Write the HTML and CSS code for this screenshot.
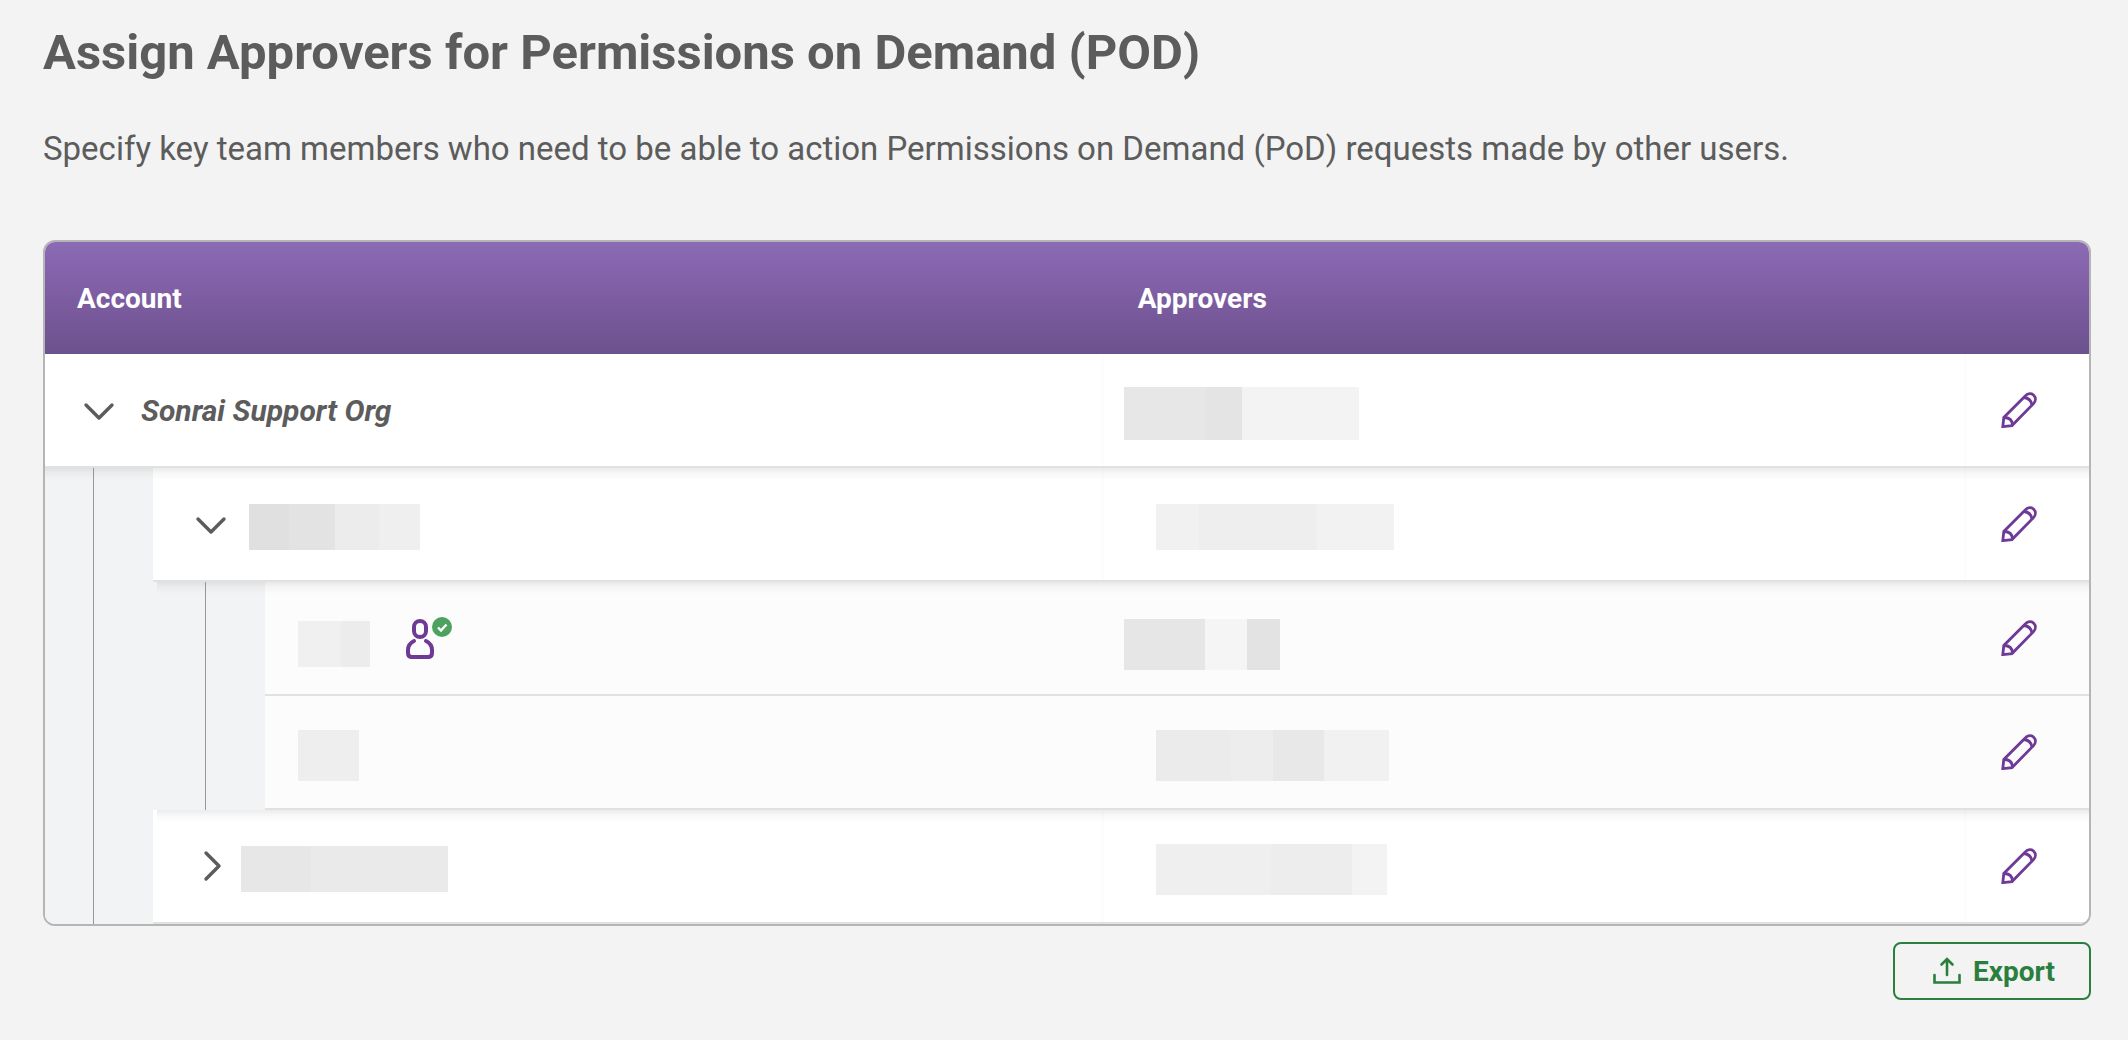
FILE: index.html
```html
<!DOCTYPE HTML>
<html lang="en">
  <head>
    <title>Assign Approvers</title>
    <meta charset="utf-8">
    <link rel="stylesheet" href="styles.css">
  </head>
  <body>

  <!-- shared icons -->
  <svg class="sprite" aria-hidden="true">
    <symbol id="chevron" viewBox="0 0 32 32">
      <path d="M3 11 L16 24 L29 11" fill="none" stroke="currentColor" stroke-width="3.4" stroke-linecap="round" stroke-linejoin="round"/>
    </symbol>
    <symbol id="pencil" viewBox="0 0 36 36">
      <g fill="none" stroke="currentColor" stroke-width="2.8">
        <path d="M1.8 34.6 L2.8 25.5 L24.5 3.7 C26.8 1 30.5 1 32.7 3.2 C35 5.5 35 9 32.5 11.6 L11 33.6 Z"/>
        <path d="M3 25.5 C8.5 25.5 11.3 28.4 11.5 33"/>
        <path d="M23 5.5 C27.5 6 30.3 8.7 31 13"/>
      </g>
    </symbol>
  </svg>

  <h1>Assign Approvers for Permissions on Demand (POD)</h1>
  <p class="intro">Specify key team members who need to be able to action Permissions on Demand (PoD) requests made by other users.</p>

  <div class="table-frame">
    <table>
      <colgroup>
        <col class="col-account">
        <col>
        <col class="col-edit">
      </colgroup>
      <thead>
        <tr>
          <th scope="col">Account</th>
          <th scope="col" class="approvers-head">Approvers</th>
          <td></td>
        </tr>
      </thead>
      <tbody>
        <tr>
          <td>
            <div class="tree">
              <div class="node root">
                <button class="toggle" aria-label="Collapse"><svg><use href="#chevron"/></svg></button>
                <span class="org">Sonrai Support Org</span>
              </div>
            </div>
          </td>
          <td class="approvers"><span class="mask root-approvers"></span></td>
          <td class="edit"><button aria-label="Edit"><svg><use href="#pencil"/></svg></button></td>
        </tr>
        <tr class="shade">
          <td>
            <div class="tree">
              <span class="indent shade"></span>
              <div class="node shade">
                <button class="toggle" aria-label="Collapse"><svg><use href="#chevron"/></svg></button>
                <span class="mask group-a"></span>
              </div>
            </div>
          </td>
          <td class="approvers inner"><span class="mask group-a-approvers"></span></td>
          <td class="edit"><button aria-label="Edit"><svg><use href="#pencil"/></svg></button></td>
        </tr>
        <tr class="leaf shade">
          <td>
            <div class="tree">
              <span class="indent"></span>
              <span class="indent deep shade"></span>
              <div class="node shade">
                <span class="mask low leaf-a"></span>
                <svg class="user" viewBox="0 0 46 42">
                  <g fill="none" stroke="#6f3996" stroke-width="4" stroke-linecap="round">
                    <rect x="8" y="4" width="12" height="16" rx="6"/>
                    <path d="M8 24 C4 26 2 29 2 33 V36 Q2 40 6 40 H22 Q26 40 26 36 V33 C26 29 24 26 20 24"/>
                  </g>
                  <circle cx="36" cy="10" r="10" fill="#4ea25f"/>
                  <path d="M32 10.5 L35 13.5 L40.5 7.5" fill="none" stroke="#fff" stroke-width="2.4"/>
                </svg>
              </div>
            </div>
          </td>
          <td class="approvers"><span class="mask low leaf-a-approvers"></span></td>
          <td class="edit"><button aria-label="Edit"><svg><use href="#pencil"/></svg></button></td>
        </tr>
        <tr class="leaf">
          <td>
            <div class="tree">
              <span class="indent"></span>
              <span class="indent deep"></span>
              <div class="node">
                <span class="mask leaf-b"></span>
              </div>
            </div>
          </td>
          <td class="approvers inner"><span class="mask leaf-b-approvers"></span></td>
          <td class="edit"><button aria-label="Edit"><svg><use href="#pencil"/></svg></button></td>
        </tr>
        <tr class="shade">
          <td>
            <div class="tree">
              <span class="indent"></span>
              <div class="node shade closed">
                <button class="toggle" aria-label="Expand"><svg><use href="#chevron"/></svg></button>
                <span class="mask group-b"></span>
              </div>
            </div>
          </td>
          <td class="approvers inner"><span class="mask group-b-approvers"></span></td>
          <td class="edit"><button aria-label="Edit"><svg><use href="#pencil"/></svg></button></td>
        </tr>
      </tbody>
    </table>
  </div>

  <div class="actions">
    <button class="export">
      <svg viewBox="0 0 28 28" fill="none" stroke="currentColor" stroke-width="2.6" stroke-linecap="round">
        <path d="M14 18 V3 M8.5 7.5 L14 2 L19.5 7.5"/>
        <path d="M1.5 18 V25.5 H26.5 V18"/>
      </svg>
      Export
    </button>
  </div>

  </body>

</html>
```
FILE: styles.css
```css
* {
  box-sizing: border-box;
}
body {
  margin: 0;
  padding: 20px 37px 40px 43px;
  background: #f3f3f3;
  color: #5c5c5c;
  font-family: Roboto,"Liberation Sans",sans-serif;
  font-size: 28px;
}
.sprite {
  display: none;
}
h1 {
  margin: 0;
  font-size: 49px;
  line-height: 66px;
  font-weight: bold;
}
.intro {
  margin: 42px 0 70px;
  font-size: 33px;
  line-height: 42px;
}
button {
  padding: 0;
  border: 0;
  background: none;
  color: inherit;
  font: inherit;
  cursor: pointer;
}

.table-frame {
  border: 2px solid #b5b5b5;
  border-radius: 12px;
  overflow: hidden;
}
table {
  width: 100%;
  table-layout: fixed;
  border-collapse: separate;
  border-spacing: 0;
}
.col-account {
  width: 51.7%;
}
.col-edit {
  width: 125px;
}
thead {
  background: linear-gradient(#8a6bb4, #8361a9 33%, #6b518d);
  color: #fff;
}
th {
  height: 112px;
  padding: 0 32px;
  text-align: left;
  font-weight: bold;
}
th.approvers-head {
  padding-left: 36px;
}

tbody td {
  height: 114px;
  padding: 0;
  background-color: #fff;
}
tbody .leaf td,
.leaf .node {
  background-color: #fcfcfc;
}
/* soft shadow cast by the row above */
.shade > td.approvers,
.shade > td.edit,
.node.shade,
.indent.shade {
  background-image: linear-gradient(rgba(0,0,0,0.08), rgba(0,0,0,0.03) 5px, rgba(0,0,0,0) 12px);
  background-repeat: no-repeat;
}
.indent.deep.shade,
.node.closed {
  background-position: 4px 0;
}
td.approvers,
td.edit {
  border-bottom: 2px solid #e1e1e1;
  box-shadow: inset 2px 0 rgba(0,0,0,0.01);
}
.leaf td.approvers,
.leaf td.edit {
  box-shadow: none;
}
td.approvers {
  padding-left: 22px;
}
td.inner {
  padding-left: 54px;
}
td.edit {
  padding-left: 37px;
  color: #6f3996;
}
td.edit button,
td.edit svg {
  display: block;
  width: 36px;
  height: 36px;
}

.tree {
  display: flex;
  height: 114px;
}
.node {
  flex: 1;
  display: flex;
  align-items: center;
  gap: 22px;
  padding-left: 42px;
  background-color: #fff;
  border-bottom: 2px solid #e1e1e1;
}
.node.root {
  gap: 26px;
  padding-left: 38px;
}
.node.closed {
  gap: 14px;
}
.leaf .node {
  gap: 36px;
  padding-left: 33px;
}
.indent {
  position: relative;
  width: 108px;
  background-color: #f2f3f5;
}
.indent.deep {
  width: 112px;
}
/* guide line down from the parent's arrow */
.indent::before {
  content: "";
  position: absolute;
  top: 0;
  bottom: 0;
  left: 48px;
  width: 1px;
  background: #979797;
}
.indent.deep::before {
  left: 52px;
}
.toggle,
.toggle svg {
  display: block;
  width: 32px;
  height: 32px;
}
.closed .toggle {
  transform: rotate(-90deg);
}
.org {
  font-size: 30px;
  font-style: italic;
  font-weight: bold;
}
.user {
  width: 46px;
  height: 42px;
}

/* blanked out names, each in its shades of grey */
.mask {
  display: block;
  height: 48px;
  margin-top: 6px;
}
.mask.low {
  margin-top: 12px;
}
.root-approvers {
  width: 235px;
  height: 53px;
  background: linear-gradient(to right, #e7e7e7 82px, #e4e4e4 82px 118px, #f3f3f3 118px);
}
.group-a {
  width: 171px;
  height: 46px;
  background: linear-gradient(to right, #e0e0e0 40px, #e3e3e3 40px 86px, #ececec 86px 130px, #efefef 130px);
}
.group-a-approvers {
  width: 238px;
  height: 46px;
  background: linear-gradient(to right, #f1f1f1 43px, #eee 43px 161px, #f2f2f2 161px);
}
.leaf-a {
  width: 72px;
  height: 46px;
  background: linear-gradient(to right, #f0f0f0 43px, #ececec 43px);
}
.leaf-a-approvers {
  width: 156px;
  height: 51px;
  background: linear-gradient(to right, #e6e6e6 81px, #f5f5f5 81px 123px, #e3e3e3 123px);
}
.leaf-b {
  width: 61px;
  height: 51px;
  background: #eee;
}
.leaf-b-approvers {
  width: 233px;
  height: 51px;
  background: linear-gradient(to right, #ebebeb 75px, #ededed 75px 117px, #e8e8e8 117px 168px, #f1f1f1 168px);
}
.group-b {
  width: 207px;
  height: 46px;
  background: linear-gradient(to right, #e7e7e7 70px, #eaeaea 70px);
}
.group-b-approvers {
  width: 231px;
  height: 51px;
  background: linear-gradient(to right, #efefef 115px, #ededed 115px 196px, #f3f3f3 196px);
}

.actions {
  display: flex;
  justify-content: flex-end;
  margin-top: 16px;
}
.export {
  display: flex;
  align-items: center;
  gap: 12px;
  height: 58px;
  padding: 0 34px 0 38px;
  border: 2px solid #2a7f3f;
  border-radius: 8px;
  color: #2a7f3f;
  font-weight: bold;
}
.export svg {
  width: 28px;
  height: 28px;
}
```
